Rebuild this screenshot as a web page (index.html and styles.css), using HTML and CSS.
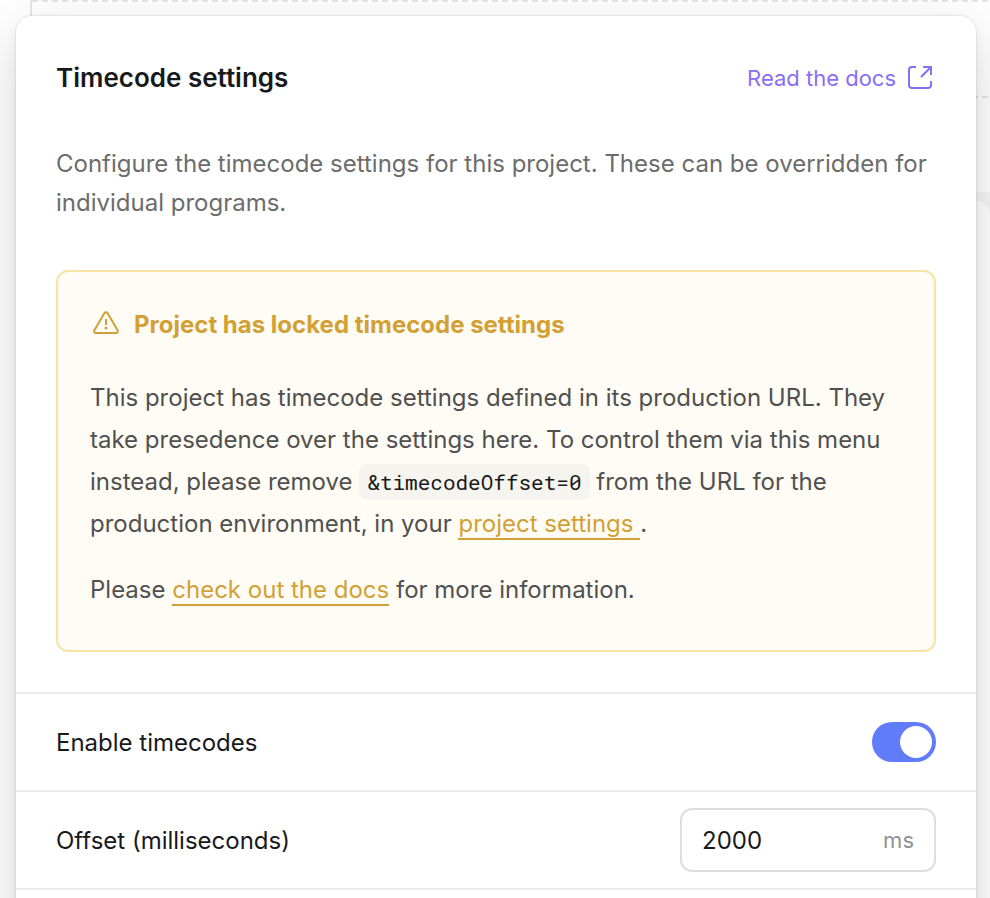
FILE: index.html
```html
<!DOCTYPE html>
<html lang="en">
<head>
    <meta charset="UTF-8">
    <meta name="viewport" content="width=device-width, initial-scale=1.0">
    <title>Timecode settings</title>
    <link rel="stylesheet" href="styles.css">
</head>
<body>
    <div class="page">
        <!-- Timeline behind the popover -->
        <div class="backdrop">
            <div class="track"></div>
            <div class="track"></div>
            <div class="panel-wrap">
                <div class="panel"></div>
            </div>
        </div>

        <main class="popover">
            <section class="intro">
                <header class="popover-header">
                    <h1>Timecode settings</h1>
                    <a class="docs-link" href="#docs">
                        Read the docs
                        <svg class="docs-icon" viewBox="0 0 32 32" fill="none" stroke="currentColor" stroke-width="2" aria-hidden="true">
                            <path d="M12 5H8a3 3 0 0 0-3 3v15a3 3 0 0 0 3 3h16a3 3 0 0 0 3-3v-4"/>
                            <path d="M19 5h8v8M27 5L17 15"/>
                        </svg>
                    </a>
                </header>

                <p class="description">Configure the timecode settings for this project. These can be overridden for individual programs.</p>

                <div class="notice">
                    <h2 class="notice-title">
                        <svg class="notice-icon" viewBox="0 0 32 32" fill="none" stroke="currentColor" stroke-width="2" stroke-linejoin="round" aria-hidden="true">
                            <path d="M14.300 4.200L4.300 21.500a1.700 1.700 0 0 0 1.500 2.500h20.400a1.700 1.700 0 0 0 1.500-2.500L17.700 4.200a2 2 0 0 0-3.400 0z"/>
                            <path d="M16 10v6"/>
                            <circle cx="16" cy="19" r="1.500" fill="currentColor" stroke="none"/>
                        </svg>
                        Project has locked timecode settings
                    </h2>
                    <p>This project has timecode settings defined in its production URL. They take presedence over the settings here. To control them via this menu instead, please remove <code>&amp;timecodeOffset=0</code> from the URL for the production environment, in your <a href="#settings">project settings&nbsp;</a>.</p>
                    <p>Please <a href="#docs">check out the docs</a> for more information.</p>
                </div>
            </section>

            <div class="row">
                <label for="enableTimecodes">Enable timecodes</label>
                <input class="switch" type="checkbox" role="switch" id="enableTimecodes" checked>
            </div>

            <div class="row">
                <label for="offset">Offset (milliseconds)</label>
                <div class="field">
                    <input type="text" inputmode="numeric" id="offset" value="2000">
                    <span class="unit">ms</span>
                </div>
            </div>

            <div class="row"></div>
        </main>
    </div>
</body>
</html>
```
FILE: styles.css
```css
* {
    box-sizing: border-box;
}

body {
    margin: 0;
    font-family: Inter, "Liberation Sans", sans-serif;
    font-size: 24px;
    color: #18191b;
    background: #fff;
}

h1, h2, p {
    margin: 0;
}

/* Backdrop and popover share one grid cell */
.page {
    display: grid;
    grid-template-columns: minmax(0, 1fr);
    height: 100vh;
    overflow: hidden;
}

.backdrop,
.popover {
    grid-area: 1 / 1;
}

/* Backdrop */
.backdrop {
    display: flex;
    flex-direction: column;
    padding-left: 30px;
}

.track {
    height: 96px;
    border-left: 2px solid #e6e6e6;
    background: repeating-linear-gradient(to right, #e6e6e6 0 6px, transparent 6px 10px) top / 100% 2px no-repeat;
}

.panel-wrap {
    flex: 1;
    padding-top: 8px;
    background: #f6f6f6;
}

.panel {
    height: 100%;
    background: #fff;
    border-radius: 16px;
}

/* Popover */
.popover {
    align-self: start;
    margin: 16px 14px 0 16px;
    background: #fff;
    border-radius: 16px;
    box-shadow: 0 0 0 1px rgba(0, 0, 0, 0.06), 0 4px 12px rgba(0, 0, 0, 0.05), 0 20px 60px rgba(0, 0, 0, 0.16);
}

.intro {
    padding: 40px;
}

.popover-header {
    display: flex;
    justify-content: space-between;
    align-items: center;
    margin-bottom: 44px;
    line-height: 44px;
}

h1 {
    font-size: 26px;
    font-weight: 600;
}

.docs-link {
    display: flex;
    align-items: center;
    gap: 8px;
    font-size: 22px;
    color: #866ff5;
    text-decoration: none;
}

.docs-icon {
    width: 32px;
    height: 32px;
}

.description {
    margin-bottom: 48px;
    line-height: 39px;
    color: #6c6c6c;
}

/* Warning notice */
.notice {
    padding: 33px 32px 39px;
    border: 2px solid #f7e3a6;
    border-radius: 12px;
    background: #fffcf5;
    color: #505050;
    line-height: 42px;
}

.notice-title {
    display: flex;
    align-items: center;
    gap: 12px;
    margin-bottom: 32px;
    font-size: 24px;
    font-weight: 700;
    line-height: 40px;
    color: #d2a034;
}

.notice-icon {
    width: 32px;
    height: 32px;
}

.notice p + p {
    margin-top: 24px;
}

.notice a {
    color: #d2a034;
    text-decoration: none;
    border-bottom: 2px solid #d2a034;
}

.notice code {
    padding: 4px 8px;
    border-radius: 8px;
    background: #f6f4ee;
    color: #18191b;
    font-family: "Roboto Mono", "Liberation Mono", monospace;
    font-size: 21px;
}

/* Setting rows */
.row {
    display: flex;
    justify-content: space-between;
    align-items: center;
    height: 98px;
    padding: 0 40px;
    border-top: 2px solid #ececec;
}

.switch {
    appearance: none;
    display: flex;
    justify-content: flex-end;
    width: 64px;
    height: 40px;
    margin: 0;
    padding: 4px;
    border-radius: 20px;
    background: #617cf8;
    cursor: pointer;
}

.switch::before {
    content: "";
    width: 32px;
    height: 32px;
    border-radius: 50%;
    background: #fff;
}

.switch:not(:checked) {
    justify-content: flex-start;
    background: #ccc;
}

.field {
    display: flex;
    align-items: center;
    width: 256px;
    height: 64px;
    padding: 0 20px;
    border: 2px solid #dedede;
    border-radius: 12px;
}

.field input {
    flex: 1;
    min-width: 0;
    padding: 0;
    border: 0;
    outline: none;
    background: none;
    color: inherit;
    font: inherit;
}

.unit {
    font-size: 22px;
    color: #929292;
}
```
